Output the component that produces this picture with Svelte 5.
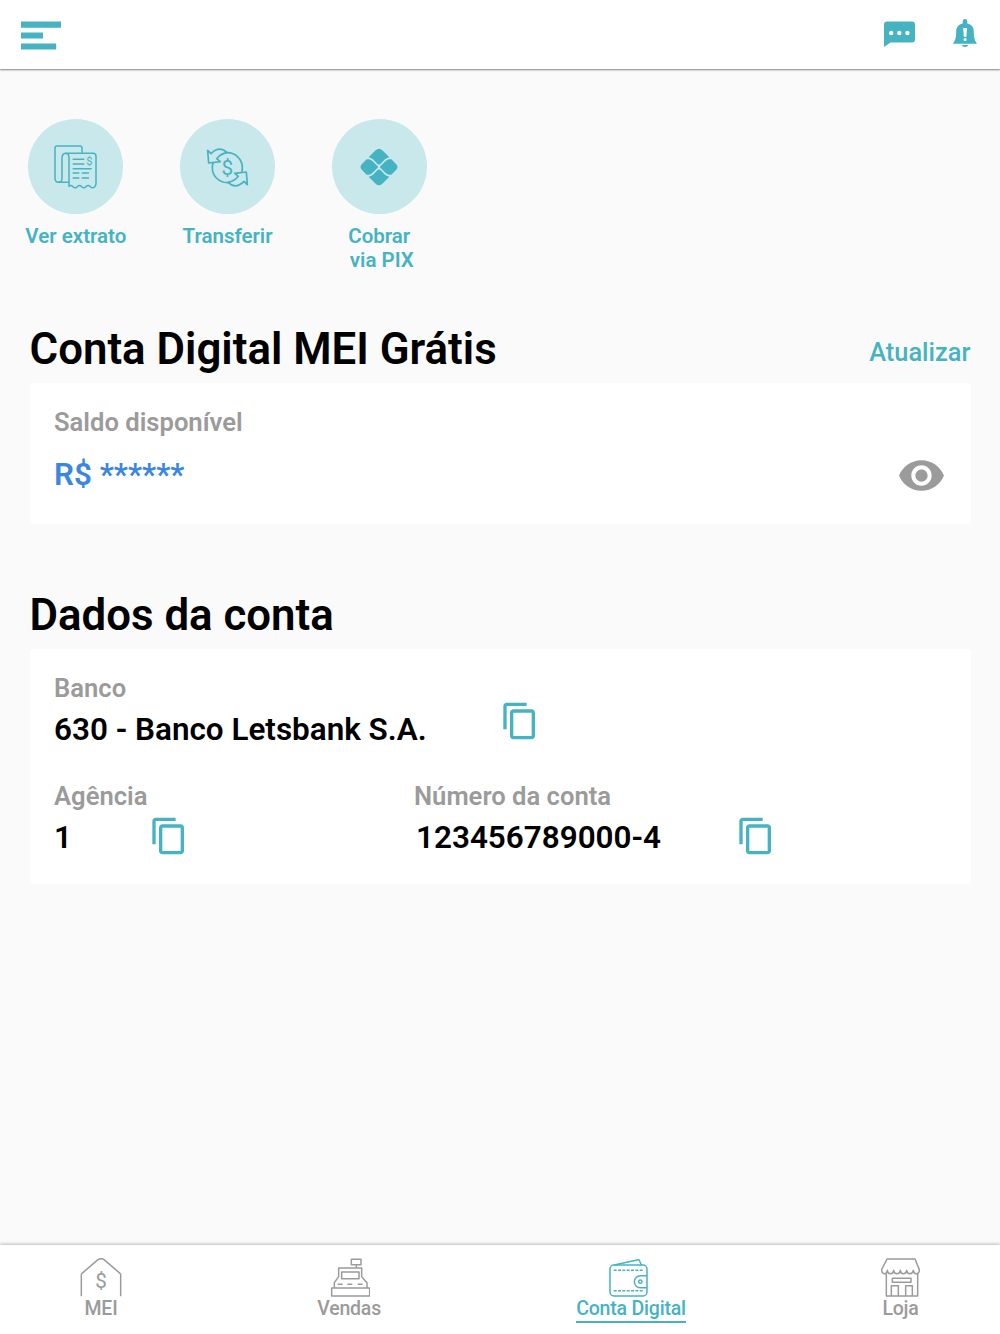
<script>
  let balanceVisible = false;
  let active = 'conta';

  const balance = '0,00';

  const tabs = [
    { id: 'mei', label: 'MEI' },
    { id: 'vendas', label: 'Vendas' },
    { id: 'conta', label: 'Conta Digital' },
    { id: 'loja', label: 'Loja' }
  ];

  function copy(text) {
    navigator.clipboard.writeText(text);
  }
</script>

<style>
  :global(body){
    background: #fafafa;
  }
  .app{
    display: flex;
    flex-direction: column;
    height: 100vh;
    min-height: 1334px;
    box-sizing: border-box;
    font-family: Roboto, "Liberation Sans", sans-serif;
    color: #000;
  }
  svg{
    display: block;
    flex: none;
  }
  button{
    border: 0;
    padding: 0;
    background: none;
    font: inherit;
    color: #46b3c2;
    cursor: pointer;
  }

  .topbar{
    display: flex;
    align-items: flex-start;
    gap: 38px;
    height: 69px;
    padding: 19px 23px 0 21px;
    box-sizing: border-box;
    background: #fff;
    box-shadow: 0 1px 2px rgba(0,0,0,0.35), 0 1px 1px rgba(0,0,0,0.15);
    color: #46b3c2;
  }
  .menu{
    margin: 2px auto 0 0;
  }
  .chat{
    margin-top: 2px;
  }

  main{
    flex: 1;
  }
  .actions{
    display: grid;
    grid-template-columns: repeat(3, 151.7px);
    padding-top: 50px;
    height: 255px;
    box-sizing: border-box;
  }
  .action{
    display: flex;
    flex-direction: column;
    align-items: center;
    justify-content: flex-start;
    font-size: 20.5px;
    font-weight: 600;
    line-height: 24px;
    white-space: pre;
  }
  .circle{
    display: flex;
    align-items: center;
    justify-content: center;
    width: 95px;
    height: 95px;
    margin-bottom: 10px;
    border-radius: 50%;
    background: #c9e8eb;
  }

  section{
    padding: 0 29.5px;
  }
  .heading{
    display: flex;
    justify-content: space-between;
    align-items: flex-start;
    height: 59px;
  }
  h2{
    margin: 0;
    font-size: 43.8px;
    font-weight: 600;
    line-height: 50px;
  }
  .refresh{
    margin-top: 13px;
    font-size: 25.4px;
    font-weight: 500;
    line-height: 30px;
  }
  .card{
    padding: 23px 24.5px 0;
    box-sizing: border-box;
    border-radius: 3px;
    background: #fff;
  }
  .card p{
    margin: 0;
    font-size: 25.6px;
    font-weight: 600;
    line-height: 32px;
    color: #9b9b9b;
  }
  .card strong{
    font-size: 31.45px;
    font-weight: 600;
    line-height: 40px;
  }
  .balance{
    height: 141px;
    margin-bottom: 66px;
  }
  .row{
    display: flex;
    justify-content: space-between;
  }
  .balance .row{
    margin-top: 17px;
  }
  .balance strong{
    color: #3b86de;
  }
  .eye{
    margin: -4px 0 0;
  }
  .data{
    height: 235px;
  }
  .fields{
    display: grid;
    grid-template-columns: 360px 1fr;
    margin-top: 28px;
  }
  .value{
    display: flex;
    align-items: flex-start;
    height: 48px;
  }
  .value strong{
    padding-top: 6px;
  }
  .value button{
    margin: -3px 0 0 73.5px;
  }
  .fields .value button{
    margin-top: 4px;
  }
  .fields .value{
    height: 40px;
  }
  .fields .short strong{
    width: 21px;
  }
  .long strong{
    padding-left: 2px;
  }
  .fields .long button{
    margin-left: 74.5px;
  }

  nav{
    display: flex;
    justify-content: space-between;
    height: 89px;
    padding: 13px 80px 0;
    box-sizing: border-box;
    background: #fff;
    box-shadow: 0 -1px 3px rgba(0,0,0,0.25);
  }
  .tab{
    display: flex;
    flex-direction: column;
    align-items: center;
    height: 65px;
    box-sizing: border-box;
    border-bottom: 2px solid transparent;
    color: #9b9b9b;
    font-size: 19.5px;
    font-weight: 500;
    letter-spacing: -0.2px;
    line-height: 24px;
  }
  .tab.active{
    color: #46b3c2;
    border-color: #46b3c2;
  }
  .line{
    fill: none;
    stroke: currentColor;
    stroke-linejoin: round;
  }
  .dollar{
    fill: currentColor;
    stroke: none;
    font-weight: 400;
    text-anchor: middle;
  }
  .arrow{
    fill: #c9e8eb;
  }
</style>

{#snippet copyButton(text)}
  <button aria-label="Copiar" on:click={() => copy(text)}>
    <svg width="40" height="40" viewBox="0 0 24 24" fill="currentColor">
      <path d="M16 1H4c-1.1 0-2 .9-2 2v14h2V3h12V1zm3 4H8c-1.1 0-2 .9-2 2v14c0 1.1.9 2 2 2h11c1.1 0 2-.9 2-2V7c0-1.1-.9-2-2-2zm0 16H8V7h11v14z"/>
    </svg>
  </button>
{/snippet}

<div class="app">
  <header class="topbar">
    <button class="menu" aria-label="Menu">
      <svg width="40" height="29" viewBox="0 0 40 29" fill="currentColor">
        <path d="M0 .6h40v6.2H0zM0 11.4h22v6.2H0zM0 22.4h35.2v6.2H0z"/>
      </svg>
    </button>
    <button class="chat" aria-label="Mensagens">
      <svg width="31" height="26" viewBox="0 0 31 26" fill="currentColor">
        <path fill-rule="evenodd" d="M3 .4h25a3 3 0 0 1 3 3V18.6a3 3 0 0 1-3 3H6.5L0 26V3.4a3 3 0 0 1 3-3zM7.2 9.8a2.2 2.2 0 1 0 0 4.4 2.2 2.2 0 0 0 0-4.4zM15.3 9.8a2.2 2.2 0 1 0 0 4.4 2.2 2.2 0 0 0 0-4.4zM23.4 9.8a2.2 2.2 0 1 0 0 4.4 2.2 2.2 0 0 0 0-4.4z"/>
      </svg>
    </button>
    <button aria-label="Notificações">
      <svg width="24" height="28" viewBox="0 0 24 28" fill="currentColor">
        <path fill-rule="evenodd" d="M12 0a2.3 2.3 0 0 1 2.3 2.3v2.2C18.5 5.5 20.8 8.3 20.8 12.5c0 6.500 1 9 3.200 12.200H0C2.200 21.500 3.200 19 3.200 12.500c0-4.200 2.300-7 6.500-8V2.300A2.300 2.300 0 0 1 12 0zM10.200 9l.6 8.800h2.600L14 9zM12.100 18.900a1.600 1.600 0 1 0 0 3.200 1.600 1.600 0 0 0 0-3.200z"/>
        <path d="M8.5 26h7q-1 2-3.500 2t-3.500-2z"/>
      </svg>
    </button>
  </header>

  <main>
    <div class="actions">
      <button class="action">
        <span class="circle">
          <svg class="line" width="43" height="44" viewBox="0 0 129 132" stroke-width="4.5">
            <path d="M84 24V9q0-6-6-6H9q-6 0-6 6v91q0 12 11 12h31"/>
            <path d="M37 25q-13 0-13 14v61q0 12-10 12"/>
            <path d="M35 25q10 1 10 12v87q6-6 13 2 7 6 13-2 6-6 13 2 7 6 13-2 6-6 13 2 7 6 13-2 3-4 3-8V34q0-9-9-9H35"/>
            <path d="M56 43h35M56 57h35M56 71h57M56 84h20M83 84h22M56 99h20M83 99h22"/>
            <text class="dollar" x="106" y="61" font-size="33">$</text>
          </svg>
        </span>Ver extrato</button>
      <button class="action">
        <span class="circle">
          <svg class="line" width="44" height="42" viewBox="0 -4 132 126" stroke-width="5">
            <circle cx="64" cy="61" r="45"/>
            <path class="arrow" d="M5 9l3 38 35-4-11-9q12-15 31-18Q40-6 15 19z"/>
            <path class="arrow" d="M5 9l3 38 35-4-11-9q12-15 31-18Q40-6 15 19z" transform="rotate(180 64.5 60.5)"/>
            <text class="dollar" x="64" y="82" font-size="62">$</text>
          </svg>
        </span>Transferir</button>
      <button class="action">
        <span class="circle">
          <svg width="38" height="38" viewBox="-57 -57 114 114" fill="currentColor">
            <path d="M-31-29L-10-50Q0-60 10-50L31-29Q24-28 18-23L5-10Q0-5-5-10L-18-23Q-24-28-31-29z"/>
            <path d="M-31 29L-10 50Q0 60 10 50L31 29Q24 28 18 23L5 10Q0 5-5 10L-18 23Q-24 28-31 29z"/>
            <path d="M-37-23H-31Q-25-23-20-18L-4-2Q-2 0-4 2L-20 18Q-25 23-31 23H-37L-51 9Q-60 0-51-9z"/>
            <path d="M37-23H31Q25-23 20-18L4-2Q2 0 4 2L20 18Q25 23 31 23H37L51 9Q60 0 51-9z"/>
          </svg>
        </span>{'Cobrar\n via PIX'}</button>
    </div>

    <section>
      <div class="heading">
        <h2>Conta Digital MEI Grátis</h2>
        <button class="refresh">Atualizar</button>
      </div>
      <div class="card balance">
        <p>Saldo disponível</p>
        <div class="row">
          <strong>R$ {balanceVisible ? balance : '******'}</strong>
          <button class="eye" aria-label="Mostrar saldo" on:click={() => balanceVisible = !balanceVisible}>
            <svg width="49" height="49" viewBox="0 0 24 24" fill="#9b9b9b">
              <path d="M12 4.5C7 4.5 2.73 7.61 1 12c1.73 4.39 6 7.5 11 7.5s9.27-3.11 11-7.5c-1.73-4.39-6-7.5-11-7.5zM12 17c-2.76 0-5-2.24-5-5s2.24-5 5-5 5 2.24 5 5-2.24 5-5 5zm0-8c-1.66 0-3 1.34-3 3s1.34 3 3 3 3-1.34 3-3-1.34-3-3-3z"/>
            </svg>
          </button>
        </div>
      </div>
    </section>

    <section>
      <div class="heading">
        <h2>Dados da conta</h2>
      </div>
      <div class="card data">
        <p>Banco</p>
        <div class="value">
          <strong>630 - Banco Letsbank S.A.</strong>
          {@render copyButton('630')}
        </div>
        <div class="fields">
          <div>
            <p>Agência</p>
            <div class="value short">
              <strong>1</strong>
              {@render copyButton('1')}
            </div>
          </div>
          <div>
            <p>Número da conta</p>
            <div class="value long">
              <strong>123456789000-4</strong>
              {@render copyButton('123456789000-4')}
            </div>
          </div>
        </div>
      </div>
    </section>
  </main>

  <nav>
    {#each tabs as tab}
      <button class="tab" class:active={active === tab.id} on:click={() => active = tab.id}>
        {#if tab.id === 'mei'}
          <svg class="line" width="42" height="39" viewBox="0 0 126 117" stroke-width="4.5">
            <path d="M4 115V51q0-3 2-5L54 5q3-3 9-3t9 3l48 41q2 2 2 5v64"/>
            <text class="dollar" x="63" y="89" font-size="62">$</text>
          </svg>
        {:else if tab.id === 'vendas'}
          <svg class="line" width="42" height="39" viewBox="-8 -2 126 117" stroke-width="4.5">
            <path d="M3 88h114v24H3zM11 88V72l13-18V28h69v26l16 18v16M33 40h52v20H33zM62 2h29v16H62zM77 18v10"/>
            <path d="M21 77h15M50 77h15M81 77h15"/>
          </svg>
        {:else if tab.id === 'conta'}
          <svg class="line" width="45" height="39" viewBox="-2 -2 135 117" stroke-width="4.5">
            <rect x="4" y="19" width="111" height="93" rx="12"/>
            <path d="M17 19L85 4q7-2 9 5l4 11M115 51H95a18 18 0 0 0 0 36h20"/>
            <path d="M15 35h90M15 96h90" stroke-dasharray="9 4"/>
            <circle cx="95" cy="69" r="5"/>
          </svg>
        {:else}
          <svg class="line" width="39" height="39" viewBox="-1 -1 117 117" stroke-width="4.5">
            <path d="M18 2h84l13 32q0 12-9 12-8 0-9-10-2 10-10 10-9 0-10-10-1 10-10 10-8 0-9-10-1 10-10 10-9 0-10-10-1 10-10 10-8 0-9-10-1 10-8 10-9 0-9-12z" transform="translate(-1 0)"/>
            <path d="M15 47v66h94V47M33 60h56v12H33zM30 113V82h21v31M73 113V82h20v31"/>
          </svg>
        {/if}
        {tab.label}
      </button>
    {/each}
  </nav>
</div>
